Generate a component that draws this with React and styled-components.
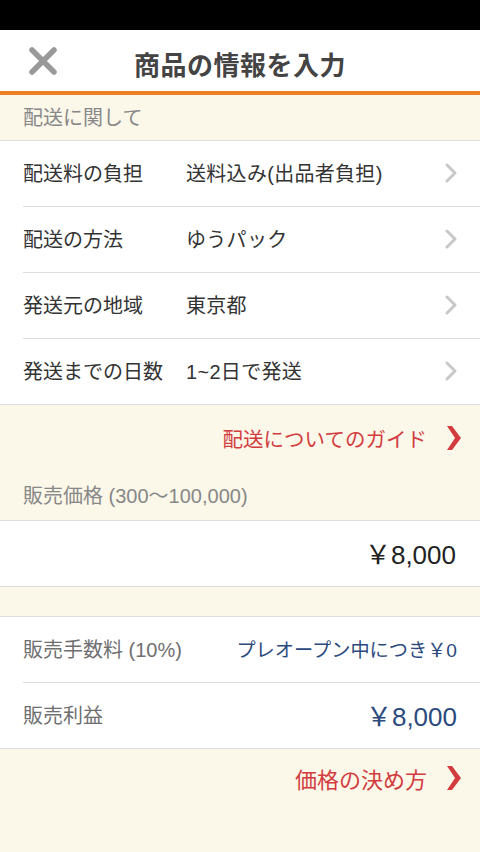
import React from 'react';
import styled, { createGlobalStyle } from 'styled-components';

const GlobalStyle = createGlobalStyle`
  html, body {
    margin: 0;
    padding: 0;
    background: #fbf7e9;
  }
  body {
    font-family: "Liberation Sans", "Noto Sans CJK JP", sans-serif;
    -webkit-font-smoothing: antialiased;
  }
`;

const Page = styled.div`
  width: 480px;
  min-height: 852px;
  background: #fbf7e9;
  display: flex;
  flex-direction: column;
`;

const StatusBar = styled.div`
  height: 30px;
  background: #000;
`;

const Header = styled.header`
  height: 61px;
  background: #fff;
  border-bottom: 4px solid #ee7f22;
  display: grid;
  grid-template-columns: 80px 1fr 80px;
  align-items: center;
`;

const CloseButton = styled.div`
  display: flex;
  align-items: center;
  padding-left: 28px;
  height: 100%;
`;

const Title = styled.h1`
  margin: 0;
  padding-top: 6px;
  text-align: center;
  font-size: 26px;
  font-weight: 700;
  color: #444;
  letter-spacing: 0.5px;
`;

const SectionHeader = styled.div`
  height: ${p => p.h}px;
  box-sizing: border-box;
  padding-left: 23px;
  padding-bottom: 2px;
  display: flex;
  align-items: center;
  font-size: 20px;
  color: #888;
  border-bottom: 1px solid #dedede;
`;

const List = styled.div`
  background: #fff;
  border-bottom: 1px solid #dedede;
`;

const Row = styled.div`
  height: 66px;
  box-sizing: border-box;
  margin-left: 23px;
  padding-right: 23px;
  padding-bottom: 2px;
  display: flex;
  align-items: center;
  border-bottom: 1px solid #dedede;
  &:last-child {
    border-bottom: none;
    height: 65px;
  }
`;

const Label = styled.div`
  width: 163px;
  flex-shrink: 0;
  font-size: 20px;
  color: ${p => (p.muted ? '#6f6f6f' : '#333')};
`;

const Value = styled.div`
  flex: 1;
  font-size: 20px;
  color: #333;
  letter-spacing: 0.3px;
`;

const Amount = styled.div`
  flex: 1;
  text-align: right;
  font-size: ${p => p.size}px;
  color: ${p => (p.blue ? '#2c4a7e' : '#222')};
  padding-right: ${p => p.pr || 0}px;
`;

const LinkRow = styled.div`
  height: ${p => p.h}px;
  display: flex;
  align-items: center;
  justify-content: flex-end;
  padding-right: 19px;
  gap: 20px;
  color: #d23c3e;
  font-size: ${p => p.size}px;
`;

const Spacer = styled.div`
  height: 29px;
  border-bottom: 1px solid #dedede;
`;

const Chevron = () => (
  <svg width="12" height="20" viewBox="0 0 12 20">
    <path d="M2 2 L10 10 L2 18" fill="none" stroke="#c8c8c8" strokeWidth="3" strokeLinecap="round" strokeLinejoin="round" />
  </svg>
);

const RedChevron = () => (
  <svg width="14" height="24" viewBox="0 0 14 24">
    <polygon points="0,0 5,0 14,12 5,24 0,24 8,12" fill="#d23c3e" />
  </svg>
);

const CloseIcon = () => (
  <svg width="30" height="30" viewBox="0 0 30 30">
    <path d="M4 4 L26 26 M26 4 L4 26" stroke="#999" strokeWidth="5.5" strokeLinecap="round" />
  </svg>
);

const shipping = [
  { label: '配送料の負担', value: '送料込み(出品者負担)' },
  { label: '配送の方法', value: 'ゆうパック' },
  { label: '発送元の地域', value: '東京都' },
  { label: '発送までの日数', value: '1~2日で発送' },
];

export default function App() {
  return (
    <Page>
      <GlobalStyle />
      <StatusBar />
      <Header>
        <CloseButton><CloseIcon /></CloseButton>
        <Title>商品の情報を入力</Title>
        <div />
      </Header>

      <SectionHeader h={46}>配送に関して</SectionHeader>
      <List>
        {shipping.map(item => (
          <Row key={item.label}>
            <Label>{item.label}</Label>
            <Value>{item.value}</Value>
            <Chevron />
          </Row>
        ))}
      </List>

      <LinkRow h={66} size={20.5}>
        <span>配送についてのガイド</span>
        <RedChevron />
      </LinkRow>

      <SectionHeader h={50}>販売価格 (300〜100,000)</SectionHeader>
      <List>
        <Row>
          <Amount size={26} pr={1}>￥8,000</Amount>
        </Row>
      </List>

      <Spacer />

      <List>
        <Row>
          <Label muted>販売手数料 (10%)</Label>
          <Amount size={19.2} blue>プレオープン中につき￥0</Amount>
        </Row>
        <Row>
          <Label muted>販売利益</Label>
          <Amount size={26} blue>￥8,000</Amount>
        </Row>
      </List>

      <LinkRow h={58} size={22}>
        <span>価格の決め方</span>
        <RedChevron />
      </LinkRow>
    </Page>
  );
}
